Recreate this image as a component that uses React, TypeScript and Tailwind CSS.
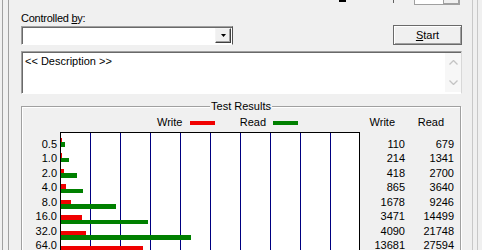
const rows = [
  { size: '0.5', write: 110, read: 679 },
  { size: '1.0', write: 214, read: 1341 },
  { size: '2.0', write: 418, read: 2700 },
  { size: '4.0', write: 865, read: 3640 },
  { size: '8.0', write: 1678, read: 9246 },
  { size: '16.0', write: 3471, read: 14499 },
  { size: '32.0', write: 4090, read: 21748 },
  { size: '64.0', write: 13681, read: 27594 },
];

// chart is 300px wide for 50000
const SCALE = 300 / 50000;

function TopStrip() {
  return (
    <div className="flex h-[5px] shrink-0 items-start">
      <div className="ml-[318px] h-[2px] w-[7px] bg-black" />
      <div className="ml-[47px] h-[3px] w-[1px] bg-[#606060]" />
      <div className="ml-[20px] flex h-[5px] w-[46px] border-x border-b border-[#a0a0a0] bg-white">
        <div className="flex-1" />
        <div className="w-[16px] border-l border-[#a0a0a0] bg-[#f0f0f0] shadow-[inset_-1px_-1px_0_#a0a0a0]" />
      </div>
    </div>
  );
}

function Combo() {
  return (
    <div className="mt-[1px] flex h-[19px] w-[212px] items-center justify-end border border-t-[#a0a0a0] border-l-[#a0a0a0] border-b-white border-r-[#505050] bg-white pr-[1px] shadow-[inset_1px_1px_0_#696969]">
      <div className="flex h-[15px] w-[16px] items-center justify-center border border-t-[#f4f4f4] border-l-[#f4f4f4] border-b-[#404040] border-r-[#404040] bg-[#f0f0f0] shadow-[inset_-1px_-1px_0_#a0a0a0]">
        <svg width="5" height="3" viewBox="0 0 5 3">
          <path d="M0 0H5L2.5 3Z" fill="#000" />
        </svg>
      </div>
    </div>
  );
}

function Description() {
  return (
    <div className="mt-[6px] flex h-[43px] shrink-0 border border-t-[#a0a0a0] border-l-[#a0a0a0] border-b-white border-r-[#d8d8d8] bg-white shadow-[inset_1px_1px_0_#696969]">
      <div className="flex-1 pl-[3px] pt-[3px]">&lt;&lt; Description &gt;&gt;</div>
      <div className="my-[1px] flex w-[16px] flex-col items-center justify-between bg-[#f7f7f7] py-[7px]">
        <svg width="9" height="5" viewBox="0 0 9 5">
          <path d="M0.5 4.5L4.5 0.5L8.5 4.5" fill="none" stroke="#c4c4c4" strokeWidth="1.3" />
        </svg>
        <svg width="9" height="5" viewBox="0 0 9 5">
          <path d="M0.5 0.5L4.5 4.5L8.5 0.5" fill="none" stroke="#c4c4c4" strokeWidth="1.3" />
        </svg>
      </div>
    </div>
  );
}

function TestResults() {
  return (
    <div className="relative mt-[12px] mr-[1px] h-[170px] shrink-0 border border-[#a0a0a0] shadow-[inset_1px_1px_0_#fff,1px_1px_0_#fff]">
      <div className="absolute -top-[7px] left-1/2 -translate-x-1/2 bg-[#f0f0f0] px-[1px]">Test Results</div>

      <div className="mt-[9px] flex h-[13px] items-center">
        <div className="flex w-[338px] items-center pl-[135px]">
          <span className="w-[33px]">Write</span>
          <span className="h-[4px] w-[25px] bg-[#f00000]" />
          <span className="w-[51px] text-right">Read</span>
          <span className="ml-[7px] h-[4px] w-[25px] bg-[#008000]" />
        </div>
        <span className="w-[45px] pr-[10px] text-right">Write</span>
        <span className="w-[49px] pr-[10px] text-right">Read</span>
      </div>

      <div className="mt-[3px] flex items-start">
        <div className="w-[35px] pt-[4.5px] text-right">
          {rows.map((r) => (
            <div key={r.size} className="h-[14.5px] leading-[14.5px]">{r.size}</div>
          ))}
        </div>
        <div className="ml-[3px] h-[200px] w-[300px] border border-black bg-white bg-[image:repeating-linear-gradient(to_right,transparent_0px,transparent_29px,#000080_29px,#000080_30px)] pt-[3.5px]">
          {rows.map((r) => (
            <div key={r.size} className="h-[14.5px]">
              <div className="mt-[1px] h-[4.5px] bg-[#f00000]" style={{ width: r.write * SCALE }} />
              <div className="h-[4.5px] bg-[#008000]" style={{ width: r.read * SCALE }} />
            </div>
          ))}
        </div>
        <div className="w-[45px] pt-[4.5px] text-right">
          {rows.map((r) => (
            <div key={r.size} className="h-[14.5px] leading-[14.5px]">{r.write}</div>
          ))}
        </div>
        <div className="w-[49px] pt-[4.5px] text-right">
          {rows.map((r) => (
            <div key={r.size} className="h-[14.5px] leading-[14.5px]">{r.read}</div>
          ))}
        </div>
      </div>
    </div>
  );
}

export default function App() {
  return (
    <div className="flex h-[250px] w-[482px] overflow-hidden bg-[#f0f0f0] font-['Liberation_Sans',Arial,sans-serif] text-[11px] leading-[13px] text-black">
      <div className="ml-[2px] w-[7px] shrink-0 border-x border-[#a0a0a0]" />
      <div className="flex w-[463px] shrink-0 flex-col pl-[12px] pr-[10px]">
        <TopStrip />
        <div className="mt-[7px] h-[13px] tracking-[-0.25px]">
          Controlled <span className="underline">b</span>y:
        </div>
        <div className="flex items-start justify-between">
          <Combo />
          <button className="h-[20px] w-[69px] border border-[#6a6a6a] bg-[#f0f0f0] shadow-[inset_1px_1px_0_#fff,inset_-1px_-1px_0_#a0a0a0]">
            <span className="underline">S</span>tart
          </button>
        </div>
        <Description />
        <TestResults />
      </div>
      <div className="w-[6px] shrink-0 border-x border-[#c8c8c8]" />
    </div>
  );
}
